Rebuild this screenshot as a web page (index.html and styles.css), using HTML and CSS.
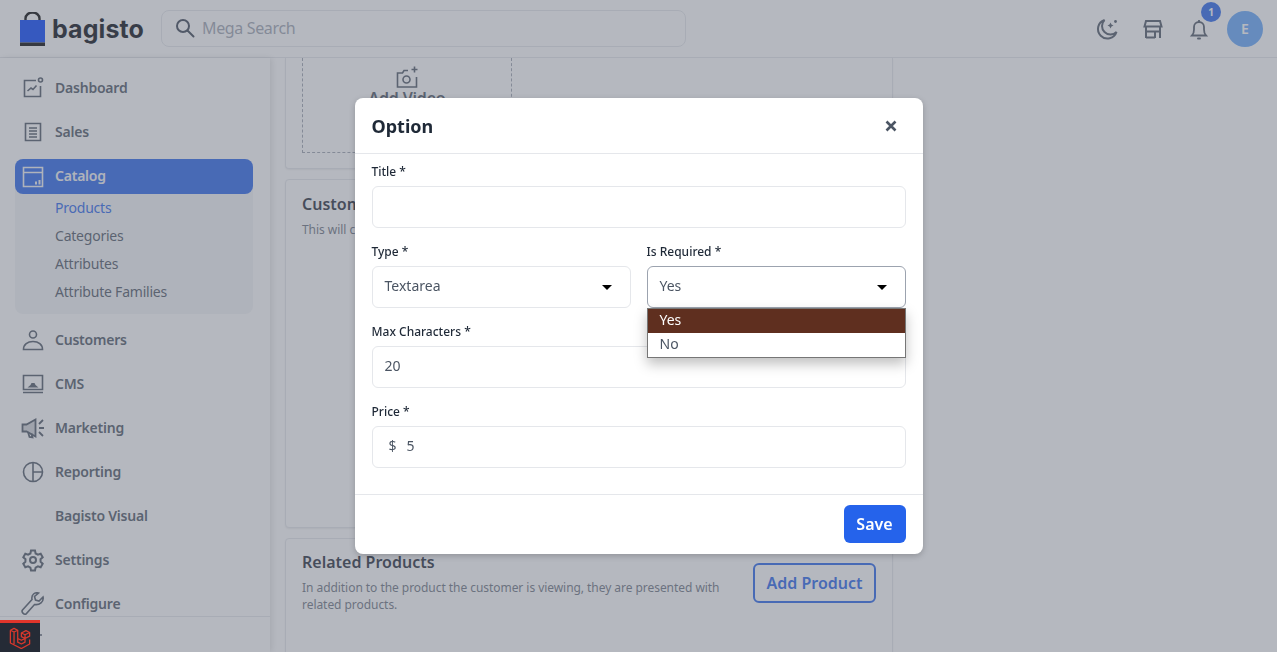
FILE: index.html
```html
<!DOCTYPE html>
<html lang="en">
<head>
<meta charset="utf-8">
<title>Option</title>
<link rel="stylesheet" href="styles.css">
</head>
<body>
<header class="topbar">
  <div class="brand">
    <svg class="brand-bag" width="25" height="34" viewBox="0 0 25 34"><path d="M5.500 9V6.500a7 6 0 0 1 14 0V9" fill="none" stroke="#000" stroke-width="2.400"/><path d="M0 8h25v22.500H0z" fill="#0041ff"/><path d="M0 30.500h25V34H0z" fill="#000"/></svg>
    <span class="brand-name">bagisto</span>
  </div>
  <div class="search">
    <svg width="20" height="20" viewBox="0 0 20 20" fill="none" stroke="#374151" stroke-width="2"><circle cx="8" cy="8" r="6"/><path d="M12.500 12.500l6 6" stroke-linecap="round"/></svg>
    <span class="search-text">Mega Search</span>
  </div>
  <div class="top-actions">
    <svg width="24" height="24" viewBox="0 0 24 24" fill="none" stroke="#4b5563" stroke-width="2"><path d="M9.500 3a9.500 9.500 0 1 0 12 12a8 8 0 0 1-12-12z"/><path d="M14.500 6.500l2 1 1 2 1-2 2-1-2-1-1-2-1 2z" fill="#4b5563" stroke="none" transform="translate(-2 2)"/><circle cx="20.500" cy="4.500" r="1.400" fill="#4b5563" stroke="none"/></svg>
    <svg width="24" height="24" viewBox="0 0 24 24" fill="none" stroke="#4b5563" stroke-width="2"><path d="M5 4h14l1.500 5.500h-17z"/><path d="M5 9.500V21M19 9.500V21M5 14.500h14M5 20.500h9M14 14.500V21"/></svg>
    <div class="bell">
      <svg width="24" height="24" viewBox="0 0 24 24" fill="none" stroke="#4b5563" stroke-width="1.800"><path d="M5 18.500c1.500-1.500 2-3 2-6V10a5 5 0 0 1 10 0v2.500c0 3 .5 4.500 2 6z"/><path d="M11 21.500h2" stroke-width="2" stroke-linecap="round"/><path d="M12 3v2"/></svg>
      <span class="badge">1</span>
    </div>
    <span class="avatar">E</span>
  </div>
</header>

<div class="workspace">
  <nav class="sidebar">
    <ul class="menu">
      <li class="menu-item">
        <svg class="menu-icon" viewBox="0 0 24 24" fill="none" stroke="#4b5563" stroke-width="1.600"><path d="M15 4.500H3.500v16h16V10"/><path d="M6.500 15l3.500-3 2 1.500 3.500-4"/><circle cx="19.500" cy="4" r="2"/></svg>
        <span class="menu-label">Dashboard</span>
      </li>
      <li class="menu-item">
        <svg class="menu-icon" viewBox="0 0 24 24" fill="none" stroke="#4b5563" stroke-width="1.600"><path d="M4.500 3.500h15v17h-15z"/><path d="M8 8h8M8 11h8M8 14h8M8 17h8"/></svg>
        <span class="menu-label">Sales</span>
      </li>
      <li class="menu-group">
        <div class="menu-item menu-item-active">
          <svg class="menu-icon" viewBox="0 0 24 24" fill="none" stroke="#f3f4f6" stroke-width="1.600"><path d="M2.500 2.500h19v19h-19zM2.500 7.500h19"/><path d="M15 16.500v3M18.500 15v4.500" stroke-width="2"/></svg>
          <span class="menu-label">Catalog</span>
        </div>
        <ul class="submenu">
          <li class="submenu-item submenu-current"><span class="menu-label">Products</span></li>
          <li class="submenu-item"><span class="menu-label">Categories</span></li>
          <li class="submenu-item"><span class="menu-label">Attributes</span></li>
          <li class="submenu-item"><span class="menu-label">Attribute Families</span></li>
        </ul>
      </li>
      <li class="menu-item">
        <svg class="menu-icon" viewBox="0 0 24 24" fill="none" stroke="#4b5563" stroke-width="1.600"><circle cx="12" cy="6.500" r="3.500"/><path d="M2.500 21.500c0-5 4-8 9.500-8s9.500 3 9.500 8z"/></svg>
        <span class="menu-label">Customers</span>
      </li>
      <li class="menu-item">
        <svg class="menu-icon" viewBox="0 0 24 24" fill="none" stroke="#4b5563" stroke-width="1.600"><path d="M2.500 3.500h19v14h-19zM2 20.500h20"/><path d="M6.500 15.500l3-2.500 1-2h3l1 2 3 2.500z" fill="#4b5563" stroke="none"/></svg>
        <span class="menu-label">CMS</span>
      </li>
      <li class="menu-item">
        <svg class="menu-icon" viewBox="0 0 24 24" fill="none" stroke="#4b5563" stroke-width="1.800"><path d="M14.500 3.500v17l-9-5h-4v-7h4z" fill="#4b5563" fill-opacity=".25"/><path d="M7 16l1.500 5 3 .5-1-4M18 8l4-4M18 12h5M18 16l4 4"/></svg>
        <span class="menu-label">Marketing</span>
      </li>
      <li class="menu-item">
        <svg class="menu-icon" viewBox="0 0 24 24" fill="none" stroke="#4b5563" stroke-width="1.600"><circle cx="12" cy="12" r="9.500"/><path d="M12 2.500v19M12 12h9.500"/></svg>
        <span class="menu-label">Reporting</span>
      </li>
      <li class="menu-item">
        <span class="menu-icon"></span>
        <span class="menu-label">Bagisto Visual</span>
      </li>
      <li class="menu-item">
        <svg class="menu-icon" viewBox="0 0 24 24" fill="none" stroke="#4b5563" stroke-width="2"><circle cx="12" cy="12" r="3"/><path d="M10 2.500h4l.6 3 2.300 1.200 2.800-1 2 3.500-2.200 2 .1 2.600 2.100 2-2 3.500-2.800-1-2.300 1.300-.6 2.900h-4l-.6-2.900-2.300-1.300-2.800 1-2-3.500 2.100-2 .1-2.600-2.200-2 2-3.500 2.800 1L9.400 5.500z"/></svg>
        <span class="menu-label">Settings</span>
      </li>
      <li class="menu-item">
        <svg class="menu-icon" viewBox="0 0 24 24" fill="none" stroke="#4b5563" stroke-width="1.600"><path d="M22 5l-4 4-3.500-1-1-3.500 4-3.500c-3.500-1-7.500 1.500-6.500 6.500L1.500 18c-1.500 2 1.500 5 3.500 4l8.500-9.500c5 1 9.500-3 8.500-7.500z"/></svg>
        <span class="menu-label">Configure</span>
      </li>
    </ul>
    <div class="sidebar-foot">
      <svg width="20" height="6" viewBox="0 0 20 6" stroke="#4b5563" stroke-width="1.500"><path d="M0 3h20"/></svg>
    </div>
  </nav>

  <main class="content">
    <section class="card card-media">
      <div class="dropzone">
        <svg width="26" height="26" viewBox="0 0 26 26" fill="none" stroke="#4b5563" stroke-width="1.600"><path d="M14 5.500H10l-1.500 2.500H3.500v14h19V12"/><circle cx="12.500" cy="14.500" r="3.500"/><path d="M20.500 1.500v6M17.500 4.500h6"/></svg>
        <span class="dropzone-label">Add Video</span>
      </div>
    </section>
    <section class="card card-custom">
      <h2 class="card-title">Customizable Options</h2>
      <p class="card-text">This will customise the product</p>
    </section>
    <section class="card card-related">
      <div class="related-copy">
        <h2 class="card-title">Related Products</h2>
        <p class="card-text">In addition to the product the customer is viewing, they are presented with related products.</p>
      </div>
      <span class="outline-button">Add Product</span>
    </section>
  </main>
</div>

<div class="overlay">
  <div class="modal">
    <div class="modal-head">
      <h1 class="modal-title">Option</h1>
      <svg width="12" height="12" viewBox="0 0 12 12" stroke="#4b5563" stroke-width="2.600"><path d="M1.500 1.500l9 9M10.500 1.500l-9 9"/></svg>
    </div>
    <div class="modal-body">
      <div class="field">
        <label class="field-label">Title *</label>
        <div class="input"></div>
      </div>
      <div class="field-row">
        <div class="field">
          <label class="field-label">Type *</label>
          <div class="input select"><span>Textarea</span><span class="caret"></span></div>
        </div>
        <div class="field">
          <label class="field-label">Is Required *</label>
          <div class="input select select-open"><span>Yes</span><span class="caret"></span></div>
          <ul class="dropdown">
            <li class="dropdown-option dropdown-selected">Yes</li>
            <li class="dropdown-option">No</li>
          </ul>
        </div>
      </div>
      <div class="field">
        <label class="field-label">Max Characters *</label>
        <div class="input">20</div>
      </div>
      <div class="field">
        <label class="field-label">Price *</label>
        <div class="input input-price"><span>$</span><span>5</span></div>
      </div>
    </div>
    <div class="modal-foot">
      <span class="save-button">Save</span>
    </div>
  </div>
</div>

<div class="debugbar">
  <svg width="22" height="22" viewBox="0 0 24 24" fill="none" stroke="#d9382c" stroke-width="1.400" stroke-linejoin="round"><path d="M1.500 3.500L5.500 1.500l4 2v13l4 2 4-2v-4l-4 2-4-2M1.500 3.500v14l12 6 9-5v-5M5.500 5.500l-4-2M5.500 5.500v13M9.500 3.500l-4 2M17.500 12.500v-4l-4-2v4l4 2 5-2.500v-4l-4-2-5 2.500M17.500 8.500l5-2.500"/></svg>
</div>
</body>
</html>
```

FILE: styles.css
```css
* { box-sizing: border-box; }
html, body { margin: 0; height: 100%; }
body {
  font-family: "Noto Sans", "Open Sans", sans-serif;
  background: #fff;
  color: #1f2937;
  overflow: hidden;
  height: 652px;
  display: flex;
  flex-direction: column;
}
ul { list-style: none; margin: 0; padding: 0; }
h1, h2, p { margin: 0; }

.topbar {
  height: 58px;
  flex: none;
  background: #fff;
  border-bottom: 1px solid #e5e7eb;
  display: flex;
  align-items: center;
  padding: 0 14px 0 20px;
}
.brand { display: flex; align-items: center; gap: 7px; width: 141px; flex: none; }
.brand-name { font-family: Inter, sans-serif; font-size: 25px; font-weight: 700; color: #050810; letter-spacing: 0.1px; }
.search {
  width: 525px;
  height: 37px;
  border: 1px solid #e5e7eb;
  border-radius: 8px;
  display: flex;
  align-items: center;
  gap: 7px;
  padding: 0 13px;
  margin-top: -1px;
}
.search-text { font-size: 16px; color: #9ca3af; letter-spacing: -0.35px; }
.top-actions { margin-left: auto; display: flex; align-items: center; gap: 22px; }
.bell { position: relative; width: 24px; height: 24px; }
.badge {
  position: absolute;
  top: -15px;
  left: 14px;
  width: 20px;
  height: 20px;
  border-radius: 50%;
  background: #2563eb;
  color: #fff;
  font-size: 10px;
  font-weight: 700;
  display: flex;
  align-items: center;
  justify-content: center;
}
.avatar {
  width: 36px;
  height: 36px;
  border-radius: 50%;
  background: #60a5fa;
  color: #fff;
  font-size: 14px;
  font-weight: 600;
  display: flex;
  align-items: center;
  justify-content: center;
  margin-left: -6px;
}

.workspace { flex: 1; display: flex; min-height: 0; }
.sidebar {
  width: 270px;
  flex: none;
  background: #fff;
  box-shadow: 2px 0 6px rgba(0, 0, 0, .12);
  display: flex;
  flex-direction: column;
  position: relative;
}
.menu { padding: 8px 17px 0 15px; flex: none; height: 558px; overflow: hidden; }
.menu-item {
  height: 44px;
  display: flex;
  align-items: center;
  gap: 10px;
  padding-left: 6px;
  font-size: 14px;
  font-weight: 600;
  color: #4b5563;
}
.menu-label { padding-bottom: 2px; letter-spacing: -0.22px; }
.menu-icon { width: 24px; height: 24px; flex: none; display: block; }
.menu-group { background: #f3f4f6; border-radius: 8px; height: 155px; margin-top: 5px; margin-bottom: 4px; }
.menu-item-active {
  height: 35px;
  background: #2563eb;
  border-radius: 8px;
  color: #f3f4f6;
}
.submenu { padding: 0 0 8px 40px; }
.submenu-item { height: 28px; display: flex; align-items: center; font-size: 14px; color: #4b5563; }
.submenu-current { color: #2563eb; }
.sidebar-foot { flex: 1; border-top: 1px solid #e5e7eb; padding: 15px 0 0 22px; }
.sidebar-foot svg { display: block; }

.content { flex: 1; min-width: 0; padding: 0 0 0 15px; display: flex; flex-direction: column; gap: 10px; overflow: hidden; }
.card {
  width: 608px;
  flex: none;
  background: #fff;
  border: 1px solid #e5e7eb;
  border-radius: 4px;
  box-shadow: 0 1px 2px rgba(0,0,0,.08);
}
.card-media { height: 111px; border-top: none; border-top-left-radius: 0; border-top-right-radius: 0; padding: 0 0 15px 16px; }
.dropzone {
  width: 210px;
  height: 95px;
  border: 1px dashed #9ca3af;
  border-top: none;
  display: flex;
  flex-direction: column;
  align-items: center;
  padding-top: 7px;
}
.dropzone-label { font-size: 16px; font-weight: 600; color: #4b5563; line-height: 18px; margin-top: -2px; letter-spacing: -0.2px; }
.card-custom { height: 349px; padding: 13px 16px; }
.card-title { font-size: 16px; font-weight: 600; color: #1f2937; line-height: 22px; }
.card-text { font-size: 12px; color: #6b7280; line-height: 17px; margin-top: 6px; letter-spacing: -0.05px; }
.card-related { height: 200px; padding: 12px 16px; display: flex; align-items: flex-start; justify-content: space-between; gap: 20px; }
.related-copy { width: 428px; }
.outline-button {
  width: 123px;
  height: 40px;
  margin-top: 12px;
  border: 2px solid #2563eb;
  border-radius: 6px;
  color: #2563eb;
  font-size: 16px;
  font-weight: 600;
  display: flex;
  align-items: center;
  justify-content: center;
}

.overlay {
  position: fixed;
  inset: 0;
  background: rgba(107, 114, 128, .5);
  display: flex;
  justify-content: center;
  align-items: flex-start;
  padding-top: 98px;
}
.modal {
  width: 568px;
  height: 456px;
  background: #fff;
  border-radius: 8px;
  box-shadow: 0 2px 6px rgba(0,0,0,.2);
  display: flex;
  flex-direction: column;
}
.modal-head {
  height: 56px;
  flex: none;
  border-bottom: 1px solid #e5e7eb;
  display: flex;
  align-items: center;
  justify-content: space-between;
  padding: 0 26px 0 17px;
}
.modal-title { font-size: 18px; font-weight: 700; color: #1f2937; }
.modal-body { flex: 1; padding: 8px 17px 0; display: flex; flex-direction: column; gap: 14px; }
.field { display: flex; flex-direction: column; min-width: 0; position: relative; }
.field-row { display: flex; gap: 16px; }
.field-row .field { flex: 1 1 0; }
.field-label { font-size: 12px; font-weight: 500; color: #1f2937; height: 24px; line-height: 20px; }
.input {
  height: 42px;
  border: 1px solid #e5e7eb;
  border-radius: 6px;
  display: flex;
  align-items: center;
  padding: 0 12px 3px;
  font-size: 14px;
  color: #4b5563;
}
.select { justify-content: space-between; padding-right: 18px; }
.select-open { border-color: #9ca3af; }
.caret { width: 0; height: 0; margin-top: 3px; border-left: 5px solid transparent; border-right: 5px solid transparent; border-top: 5px solid #000; }
.input-price { gap: 10px; padding-left: 16px; }
.dropdown {
  position: absolute;
  top: 66px;
  left: 0;
  right: 0;
  background: #fff;
  border: 1px solid #767676;
  box-shadow: 0 6px 12px rgba(0,0,0,.25);
  z-index: 2;
}
.dropdown-option { height: 24px; padding: 0 12px 3px; display: flex; align-items: center; font-size: 14px; color: #4b5563; }
.dropdown-selected { background: #5f2f1f; color: #fff; }
.modal-foot {
  height: 60px;
  flex: none;
  border-top: 1px solid #e5e7eb;
  display: flex;
  justify-content: flex-end;
  align-items: flex-start;
  padding: 10px 17px 0 0;
}
.save-button {
  width: 62px;
  height: 38px;
  background: #2563eb;
  color: #fff;
  border-radius: 6px;
  font-size: 16px;
  font-weight: 600;
  display: flex;
  align-items: center;
  justify-content: center;
}

.debugbar {
  position: fixed;
  left: 0;
  bottom: 0;
  width: 40px;
  height: 32px;
  background: #252b36;
  border-top: 3px solid #e0352b;
  display: flex;
  align-items: center;
  justify-content: center;
}
```
